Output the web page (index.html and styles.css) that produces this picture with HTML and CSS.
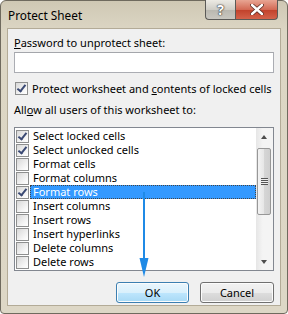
FILE: index.html
```html
<!DOCTYPE html>
<html lang="en">
<head>
    <meta charset="UTF-8">
    <title>Protect Sheet</title>
    <link rel="stylesheet" href="styles.css">
</head>
<body>
<div class="window">
    <div class="titlebar">
        <span class="title">Protect Sheet</span>
        <div class="caption-btns">
            <div class="cap-btn help">?</div>
            <div class="cap-btn close">
                <svg width="14" height="11" viewBox="0 0 14 11">
                    <path d="M2 1 L12 10 M12 1 L2 10" stroke="#5a2a22" stroke-width="4" stroke-linecap="round"/>
                    <path d="M2 1 L12 10 M12 1 L2 10" stroke="#fff" stroke-width="2.4" stroke-linecap="round"/>
                </svg>
            </div>
        </div>
    </div>

    <div class="client">
        <div class="label"><u>P</u>assword to unprotect sheet:</div>
        <div class="textbox"></div>

        <div class="check-row">
            <span class="chk checked"></span>
            <span>Protect worksheet and <u>c</u>ontents of locked cells</span>
        </div>

        <div class="label">All<u>o</u>w all users of this worksheet to:</div>

        <div class="listbox">
            <div class="items">
                <div class="item"><span class="chk checked"></span><span class="txt">Select locked cells</span></div>
                <div class="item"><span class="chk checked"></span><span class="txt">Select unlocked cells</span></div>
                <div class="item"><span class="chk"></span><span class="txt">Format cells</span></div>
                <div class="item"><span class="chk"></span><span class="txt">Format columns</span></div>
                <div class="item selected"><span class="chk checked"></span><span class="txt">Format rows</span></div>
                <div class="item"><span class="chk"></span><span class="txt">Insert columns</span></div>
                <div class="item"><span class="chk"></span><span class="txt">Insert rows</span></div>
                <div class="item"><span class="chk"></span><span class="txt">Insert hyperlinks</span></div>
                <div class="item"><span class="chk"></span><span class="txt">Delete columns</span></div>
                <div class="item"><span class="chk"></span><span class="txt">Delete rows</span></div>
            </div>
            <div class="scrollbar">
                <div class="sb-arrow up"></div>
                <div class="sb-track">
                    <div class="thumb"><span class="grip"></span></div>
                </div>
                <div class="sb-arrow down"></div>
            </div>
        </div>

        <div class="buttons">
            <button class="btn ok">OK</button>
            <button class="btn">Cancel</button>
        </div>
    </div>

    <!-- callout arrow drawn over the dialog -->
    <svg class="callout" width="288" height="314" viewBox="0 0 288 314">
        <rect x="143" y="192" width="2" height="68" fill="#1f8ae6"/>
        <polygon points="139.5,258 148.5,258 144,277" fill="#1f8ae6"/>
    </svg>
</div>
</body>
</html>
```

FILE: styles.css
```css
body {
    margin: 0;
    background: #fff;
    font-family: "Noto Sans", Arial, sans-serif;
    font-size: 11px;
    color: #000;
}

.window {
    position: relative;
    width: 288px;
    height: 314px;
    box-sizing: border-box;
    background: linear-gradient(#cfc8b4, #dcd6c4 30px, #ddd7c6);
    border: 1px solid #6f6a5e;
    border-radius: 6px 6px 4px 4px;
    padding: 0 6px 7px 6px;
    display: flex;
    flex-direction: column;
}

.titlebar {
    height: 27px;
    display: flex;
    justify-content: space-between;
    align-items: flex-start;
}
.title {
    padding: 7px 0 0 1px;
    font-size: 11.8px;
    line-height: 15px;
}

.caption-btns {
    display: flex;
    margin-right: 3px;
    margin-top: -1px;
}
.cap-btn {
    height: 20px;
    box-sizing: border-box;
    border: 1px solid #5b5a57;
    border-top: none;
    display: flex;
    align-items: center;
    justify-content: center;
}
.help {
    width: 30px;
    border-radius: 0 0 0 4px;
    border-right: none;
    background: linear-gradient(#eceae4, #cfcdc6 50%, #b9b7af 51%, #c9c7c0);
    color: #fff;
    font-weight: bold;
    font-size: 14px;
    text-shadow: 0 0 1px #333, 0 0 1px #333, 0 0 2px #555;
}
.close {
    width: 43px;
    border-radius: 0 0 4px 0;
    background: linear-gradient(#e8a593, #d36a55 50%, #c1402a 51%, #d4624a);
}

.client {
    flex: 1;
    background: #f0f0f0;
    border: 1px solid #b3ab97;
    padding: 0 6px 0 6px;
    display: flex;
    flex-direction: column;
}

.label {
    height: 15px;
    line-height: 15px;
    margin-top: 6px;
    white-space: nowrap;
}
.label:nth-of-type(3) {
    margin-top: 0;
}

.textbox {
    height: 21px;
    box-sizing: border-box;
    margin-top: 2px;
    background: #fff;
    border: 1px solid #abadb3;
    border-top-color: #a4a6ab;
}

.check-row {
    display: flex;
    align-items: center;
    height: 16px;
    margin-top: 7px;
    padding-left: 1px;
    white-space: nowrap;
}
.check-row .chk {
    margin-right: 4px;
}

.chk {
    position: relative;
    width: 13px;
    height: 13px;
    box-sizing: border-box;
    flex: none;
    border: 1px solid #8e8f8f;
    background: linear-gradient(135deg, #d8d8d8, #f6f6f6 70%, #fff);
}
.chk.checked::after {
    content: "";
    position: absolute;
    left: 3px;
    top: 0;
    width: 3px;
    height: 7px;
    border: solid #3b4a74;
    border-width: 0 2px 2px 0;
    transform: rotate(38deg);
}

.listbox {
    height: 144px;
    box-sizing: border-box;
    margin-top: 10px;
    background: #fff;
    border: 1px solid #828790;
    display: flex;
}
.items {
    flex: 1;
    padding-top: 1px;
}
.item {
    height: 14px;
    display: flex;
    align-items: center;
    padding-left: 1px;
}
.item .txt {
    height: 14px;
    line-height: 14px;
    padding: 0 2px 0 3px;
    margin-left: 1px;
    white-space: nowrap;
}
.item.selected .txt {
    flex: 1;
    background: #3399ff;
    color: #fff;
    outline: 1px dotted #444;
    outline-offset: -1px;
}

.scrollbar {
    width: 17px;
    display: flex;
    flex-direction: column;
    background: linear-gradient(90deg, #e6e6e6, #f4f4f4 40%, #f4f4f4);
}
.sb-arrow {
    height: 17px;
    position: relative;
}
.sb-arrow::after {
    content: "";
    position: absolute;
    left: 5px;
    border-left: 3.5px solid transparent;
    border-right: 3.5px solid transparent;
}
.sb-arrow.up::after {
    top: 7px;
    border-bottom: 4px solid #4d4d4d;
}
.sb-arrow.down::after {
    top: 7px;
    border-top: 4px solid #4d4d4d;
}
.sb-track {
    flex: 1;
    padding-top: 3px;
}
.thumb {
    width: 14px;
    height: 67px;
    margin-left: 1px;
    box-sizing: border-box;
    border: 1px solid #979797;
    border-radius: 2px;
    background: linear-gradient(90deg, #f3f3f3, #e6e6e6 50%, #d6d6d6 51%, #cfcfcf);
    display: flex;
    align-items: center;
    justify-content: center;
}
.grip {
    width: 7px;
    height: 7px;
    background: repeating-linear-gradient(#555 0 1px, #eee 1px 2px);
}

.buttons {
    display: flex;
    justify-content: flex-end;
    gap: 11px;
    margin-top: 11px;
}
.btn {
    width: 74px;
    height: 21px;
    font: inherit;
    color: #000;
    border: 1px solid #707070;
    border-radius: 3px;
    background: linear-gradient(#f2f2f2, #ebebeb 50%, #dddddd 51%, #cfcfcf);
    box-shadow: inset 0 0 0 1px #fcfcfc;
    padding: 0;
}
.btn.ok {
    width: 73px;
    border-color: #3c7fb1;
    background: linear-gradient(#eaf6fd, #d9f0fc 50%, #bee6fd 51%, #a7d9f5);
}

.callout {
    position: absolute;
    left: -1px;
    top: -1px;
    pointer-events: none;
}
```
